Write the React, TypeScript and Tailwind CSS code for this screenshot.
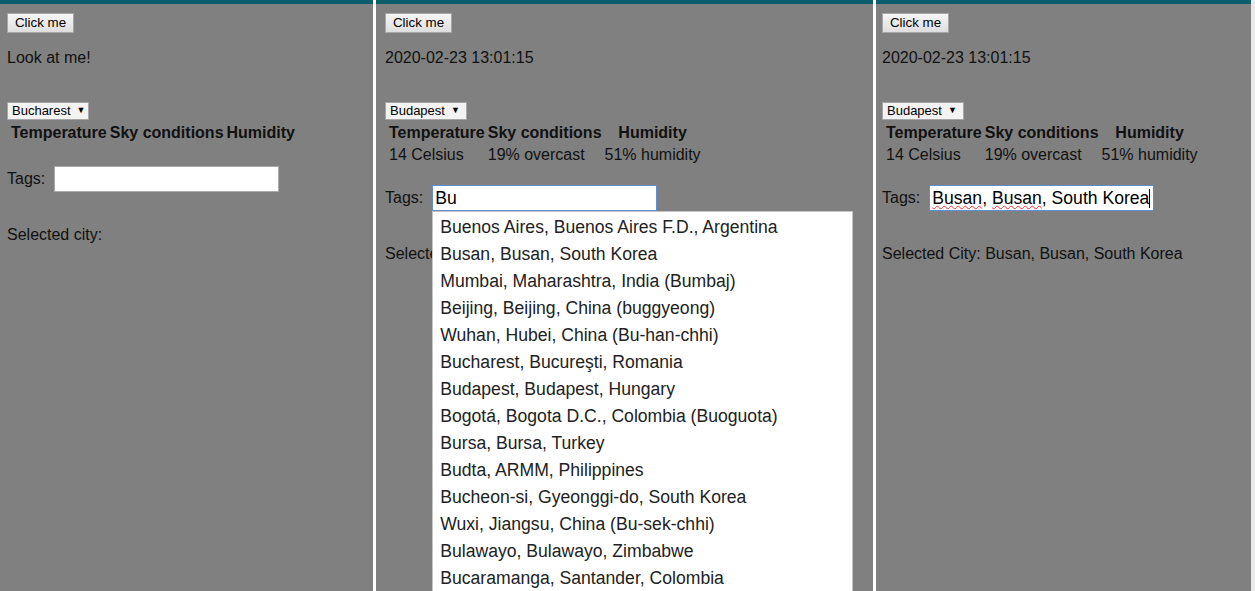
const cities = [
  "Buenos Aires, Buenos Aires F.D., Argentina",
  "Busan, Busan, South Korea",
  "Mumbai, Maharashtra, India (Bumbaj)",
  "Beijing, Beijing, China (buggyeong)",
  "Wuhan, Hubei, China (Bu-han-chhi)",
  "Bucharest, Bucureşti, Romania",
  "Budapest, Budapest, Hungary",
  "Bogotá, Bogota D.C., Colombia (Buoguota)",
  "Bursa, Bursa, Turkey",
  "Budta, ARMM, Philippines",
  "Bucheon-si, Gyeonggi-do, South Korea",
  "Wuxi, Jiangsu, China (Bu-sek-chhi)",
  "Bulawayo, Bulawayo, Zimbabwe",
  "Bucaramanga, Santander, Colombia",
];

function ClickButton() {
  return (
    <div className="mt-[9px] flex">
      <button className="h-[20px] w-[67px] border border-[#a6a6a6] bg-gradient-to-b from-[#f6f6f6] to-[#dedede] text-[13.33px] leading-none text-black">
        Click me
      </button>
    </div>
  );
}

function CitySelect({ city }: { city: string }) {
  return (
    <div className="mt-[35px] flex h-[18px] w-[82px] items-center gap-[6px] border border-[#a6a6a6] bg-[#f3f3f3] pl-[4px] text-[13px] text-black">
      <span>{city}</span>
      <span className="text-[9px]">▼</span>
    </div>
  );
}

function Weather({ withData }: { withData: boolean }) {
  return (
    <div className="flex">
      <table className="ml-px border-separate border-spacing-x-[3px] border-spacing-y-[3px] text-[16px] leading-[19px] text-[#111]">
        <tbody>
          <tr>
            <th className="p-0 text-center font-bold">Temperature</th>
            <th className="p-0 text-center font-bold">Sky conditions</th>
            <th className="p-0 text-center font-bold">Humidity</th>
          </tr>
          {withData && (
            <tr>
              <td className="p-0 text-left">14 Celsius</td>
              <td className="p-0 text-left">19% overcast</td>
              <td className="p-0 text-left">51% humidity</td>
            </tr>
          )}
        </tbody>
      </table>
    </div>
  );
}

export default function App() {
  return (
    <div className="flex h-[591px] w-[1255px] overflow-hidden bg-white font-['Liberation_Sans',Arial,sans-serif] text-[16px] text-[#111]">
      {/* first window */}
      <div className="flex h-full w-[373px] shrink-0 flex-col border-t-4 border-[#0d5e6c] bg-[#808080] pl-[7px]">
        <ClickButton />
        <p className="mt-[16px] h-[18px] leading-[18px]">Look at me!</p>
        <CitySelect city="Bucharest" />
        <Weather withData={false} />
        <div className="mt-[21px] flex items-center gap-[9px]">
          <span>Tags:</span>
          <div className="h-[26px] w-[225px] border border-[#a9a9a9] bg-white"></div>
        </div>
        <p className="mt-[34px] h-[18px] leading-[18px]">Selected city:</p>
      </div>

      <div className="w-[3px] shrink-0 bg-white"></div>

      {/* second window, autocomplete open */}
      <div className="flex h-full w-[497px] shrink-0 flex-col border-t-4 border-[#0d5e6c] bg-[#808080] pl-[9px]">
        <ClickButton />
        <p className="mt-[16px] h-[18px] leading-[18px]">2020-02-23 13:01:15</p>
        <CitySelect city="Budapest" />
        <Weather withData />
        <div className="mt-[18px] flex items-center gap-[9px]">
          <span>Tags:</span>
          <div className="relative">
            <div className="flex h-[26px] w-[225px] items-center border border-[#5b8fd1] bg-white pl-[2px] text-[17.6px] text-black">
              Bu
            </div>
            <ul className="absolute left-0 top-[26px] z-10 w-[421px] border border-[#c5c5c5] bg-white pt-[2px] text-[17.6px] text-[#222]">
              {cities.map((c) => (
                <li key={c} className="flex h-[27px] items-center pl-[7px]">
                  {c}
                </li>
              ))}
            </ul>
          </div>
        </div>
        <p className="mt-[34px] h-[18px] leading-[18px]">Selected City:</p>
      </div>

      <div className="w-[3px] shrink-0 bg-white"></div>

      {/* third window, city picked */}
      <div className="flex h-full w-[375px] shrink-0 flex-col border-t-4 border-[#0d5e6c] bg-[#808080] pl-[6px]">
        <ClickButton />
        <p className="mt-[16px] h-[18px] leading-[18px]">2020-02-23 13:01:15</p>
        <CitySelect city="Budapest" />
        <Weather withData />
        <div className="mt-[18px] flex items-center gap-[9px]">
          <span>Tags:</span>
          <div className="flex h-[26px] w-[225px] items-center border border-[#5b8fd1] bg-white pl-[2px] text-[17.6px] text-black">
            <span className="underline decoration-red-500 decoration-wavy decoration-1 underline-offset-[1px]">Busan</span>
            <span>,&nbsp;</span>
            <span className="underline decoration-red-500 decoration-wavy decoration-1 underline-offset-[1px]">Busan</span>
            <span>, South Korea</span>
            <span className="h-[19px] w-px bg-black"></span>
          </div>
        </div>
        <p className="mt-[34px] h-[18px] leading-[18px]">Selected City: Busan, Busan, South Korea</p>
      </div>

      <div className="flex-1 bg-[#e9e9e9]"></div>
    </div>
  );
}
